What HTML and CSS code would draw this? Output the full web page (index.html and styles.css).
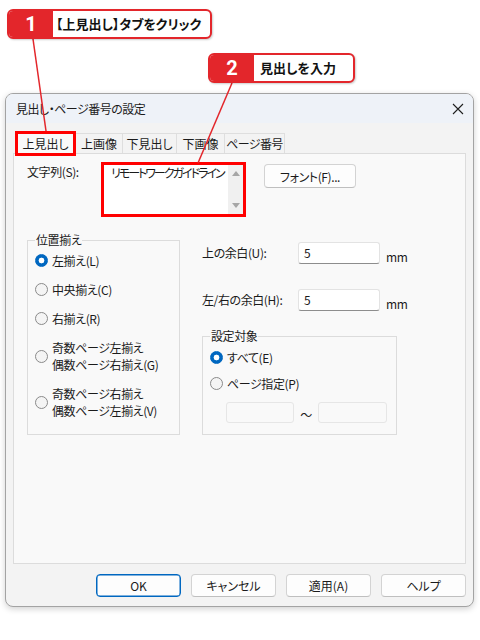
FILE: index.html
```html
<!DOCTYPE html>
<html lang="ja">
<head>
<meta charset="utf-8">
<title>見出し・ページ番号の設定</title>
<link rel="stylesheet" href="styles.css">
</head>
<body>
<div class="page">
  <div class="dialog">
    <div class="titlebar">
      <span class="title">見出し・ページ番号の設定</span>
      <svg class="close" width="12" height="12" viewBox="0 0 12 12"><path d="M1 1 L11 11 M11 1 L1 11" stroke="#1f1f1f" stroke-width="1.1" fill="none"/></svg>
    </div>
    <div class="dbody">
      <div class="tabs">
        <div class="tab active t60">上見出し</div>
        <div class="tab t47">上画像</div>
        <div class="tab t54">下見出し</div>
        <div class="tab t48">下画像</div>
        <div class="tab t60 narrow">ページ番号</div>
      </div>
      <div class="panel">
        <div class="row1">
          <span class="lbl">文字列(S):</span>
          <div class="textbox">
            <span class="tbtext">リモートワークガイドライン</span>
            <div class="scroll"><i class="up"></i><i class="down"></i></div>
          </div>
          <button class="btn font">フォント(F)...</button>
        </div>
        <div class="row2">
          <fieldset class="group align">
            <legend>位置揃え</legend>
            <div class="radios">
              <div class="radio checked"><span class="dot"></span><span>左揃え(L)</span></div>
              <div class="radio"><span class="dot"></span><span>中央揃え(C)</span></div>
              <div class="radio"><span class="dot"></span><span>右揃え(R)</span></div>
              <div class="radio"><span class="dot"></span><span>奇数ページ左揃え<br>偶数ページ右揃え(G)</span></div>
              <div class="radio"><span class="dot"></span><span>奇数ページ右揃え<br>偶数ページ左揃え(V)</span></div>
            </div>
          </fieldset>
          <div class="right">
            <div class="field"><span class="flbl">上の余白(U):</span><span class="input">5</span><span class="unit">mm</span></div>
            <div class="field second"><span class="flbl">左/右の余白(H):</span><span class="input">5</span><span class="unit">mm</span></div>
            <fieldset class="group target">
              <legend>設定対象</legend>
              <div class="radios tight">
                <div class="radio checked"><span class="dot"></span><span>すべて(E)</span></div>
                <div class="radio"><span class="dot"></span><span>ページ指定(P)</span></div>
              </div>
              <div class="range">
                <span class="input dis w68"></span>
                <span class="tilde">～</span>
                <span class="input dis w69"></span>
              </div>
            </fieldset>
          </div>
        </div>
      </div>
      <div class="footer">
        <button class="btn act default">OK</button>
        <button class="btn act">キャンセル</button>
        <button class="btn act">適用(A)</button>
        <button class="btn act">ヘルプ</button>
      </div>
    </div>
  </div>

  <svg class="leaders" width="480" height="640" viewBox="0 0 480 640">
    <line x1="33" y1="39" x2="46" y2="131" stroke="#e3262b" stroke-width="1.5"/>
    <line x1="232" y1="83" x2="198" y2="163" stroke="#e3262b" stroke-width="1.5"/>
  </svg>

  <div class="callout c1"><span class="num">1</span><span class="ctext">【上見出し】タブをクリック</span></div>
  <div class="callout c2"><span class="num">2</span><span class="ctext">見出しを入力</span></div>
</div>
</body>
</html>
```

FILE: styles.css
```css
* { box-sizing: border-box; }

body {
  margin: 0;
  background: #fff;
  font-family: "Noto Sans CJK JP", "Noto Sans", sans-serif;
  font-size: 12px;
  color: #1b1b1b;
  font-feature-settings: "palt";
}

.page {
  position: relative;
  width: 480px;
  height: 640px;
  padding: 93px 0 0 5px;
}

.dialog {
  width: 469px;
  height: 514px;
  border: 1px solid #a3a3a3;
  border-radius: 8px;
  background: #f3f3f3;
  box-shadow: 0 2px 6px rgba(0, 0, 0, 0.18);
  display: flex;
  flex-direction: column;
  overflow: hidden;
}

.titlebar {
  height: 29px;
  flex: none;
  background: #eef2f8;
  display: flex;
  align-items: center;
  justify-content: space-between;
  padding: 0 9px 0 10px;
}

.title { line-height: 16px; margin-top: 1px; letter-spacing: -0.5px; }

.close { display: block; }

.dbody {
  flex: 1;
  display: flex;
  flex-direction: column;
  padding: 10px 7px 0 7px;
}

.tabs {
  display: flex;
  height: 20px;
  padding-left: 2px;
  flex: none;
}

.tab {
  position: relative;
  height: 20px;
  border: 1px solid #dedede;
  border-bottom: none;
  margin-right: -1px;
  background: #f3f3f3;
  text-align: center;
  line-height: 19px;
  white-space: nowrap;
}
.tab.narrow { letter-spacing: -0.6px; }
.tab.active { background: #f9f9f9; z-index: 2; height: 21px; }
.tab.active::after {
  content: "";
  position: absolute;
  left: -1px;
  right: -1px;
  top: -3px;
  bottom: -2px;
  border: 3px solid #f00;
}
.t60 { width: 61px; }
.t47 { width: 48px; }
.t54 { width: 55px; }
.t48 { width: 49px; }

.panel {
  flex: none;
  height: 411px;
  background: #f9f9f9;
  border: 1px solid #dcdcdc;
  padding: 8px 0 0 13px;
  letter-spacing: -0.4px;
}

.row1 {
  display: flex;
  align-items: flex-start;
}

.lbl {
  width: 74px;
  line-height: 18px;
  margin-top: 1px;
}

.textbox {
  width: 145px;
  height: 55px;
  border: 3px solid #f00;
  background: #fff;
  display: flex;
}
.tbtext {
  flex: 1;
  min-width: 0;
  padding: 0 0 0 7px;
  line-height: 16px;
  white-space: nowrap;
  letter-spacing: -2px;
  overflow: hidden;
}
.scroll {
  width: 15px;
  flex: none;
  background: #f0f0f0;
  display: flex;
  flex-direction: column;
  justify-content: space-between;
  align-items: center;
  padding: 6px 0;
}
.scroll i { display: block; width: 0; height: 0; border-left: 4px solid transparent; border-right: 4px solid transparent; }
.scroll .up { border-bottom: 5px solid #a6a6a6; }
.scroll .down { border-top: 5px solid #a6a6a6; }

.btn {
  font: inherit;
  letter-spacing: inherit;
  color: #1b1b1b;
  background: #fdfdfd;
  border: 1px solid #d3d3d3;
  border-bottom-color: #bfbfbf;
  border-radius: 4px;
  padding: 0;
}
.btn.font {
  margin-left: 18px;
  margin-top: 2px;
  width: 92px;
  height: 24px;
}

.row2 {
  display: flex;
  align-items: stretch;
  margin-top: 15px;
}

.group {
  margin: 0;
  min-width: 0;
  border: 1px solid #dcdcdc;
  padding: 0 0 0 7px;
}
.group legend {
  padding: 0 1px;
  line-height: 16px;
}

.align {
  width: 153px;
  padding-bottom: 15px;
}

.radios {
  display: flex;
  flex-direction: column;
  gap: 12px;
  padding-top: 4px;
}
.radios.tight { gap: 9px; padding-top: 5px; }

.radio {
  display: flex;
  align-items: center;
  gap: 4px;
  line-height: 17px;
}
.dot {
  flex: none;
  width: 13px;
  height: 13px;
  border-radius: 50%;
  border: 1px solid #8a8a8a;
  background: #f4f4f4;
}
.radio.checked .dot {
  border-color: #0067c0;
  background: radial-gradient(circle, #fff 0 2.6px, #0067c0 3.2px);
}

.right {
  margin-left: 22px;
  display: flex;
  flex-direction: column;
  padding-top: 10px;
}

.field {
  display: flex;
  align-items: flex-start;
  height: 22px;
}
.field.second { margin-top: 25px; }
.flbl { width: 96px; line-height: 22px; }

.input {
  display: block;
  width: 82px;
  height: 22px;
  background: #fff;
  border: 1px solid #e3e3e3;
  border-bottom-color: #8d8d8d;
  border-radius: 3px;
  padding-left: 5px;
  line-height: 20px;
}
.unit { margin-left: 6px; margin-top: 6px; line-height: 18px; }

.target {
  width: 195px;
  flex: 1;
  margin-top: 17px;
}

.range {
  display: flex;
  align-items: flex-end;
  margin: 10px 0 0 16px;
}
.input.dis {
  height: 21px;
  background: #f9f9f9;
  border: 1px solid #e6e6e6;
}
.w68 { width: 68px; }
.w69 { width: 69px; }
.tilde { width: 24px; text-align: center; line-height: 16px; }

.footer {
  display: flex;
  justify-content: flex-end;
  gap: 10px;
  padding-top: 10px;
}
.btn.act { width: 85px; height: 23px; }
.btn.default { border: 1px solid #0067c0; box-shadow: inset 0 0 0 0.5px #0067c0; }

.leaders {
  position: absolute;
  left: 0;
  top: 0;
  pointer-events: none;
}

.callout {
  position: absolute;
  display: flex;
  height: 30px;
  border: 2px solid #e3262b;
  border-radius: 6px;
  background: #fff;
  overflow: hidden;
  box-shadow: 1px 1px 2px rgba(0, 0, 0, 0.2);
}
.c1 { left: 7px; top: 9px; width: 205px; }
.c2 { left: 208px; top: 53px; width: 147px; }

.num {
  width: 44px;
  flex: none;
  background: #e3262b;
  color: #fff;
  font-family: "Roboto", "Liberation Sans", sans-serif;
  font-weight: 700;
  font-size: 20px;
  display: flex;
  align-items: center;
  justify-content: center;
}
.ctext {
  padding-left: 3px;
  font-weight: 700;
  font-size: 13px;
  line-height: 26px;
  color: #111;
  white-space: nowrap;
}
.c2 .ctext { padding-left: 6px; }
```
